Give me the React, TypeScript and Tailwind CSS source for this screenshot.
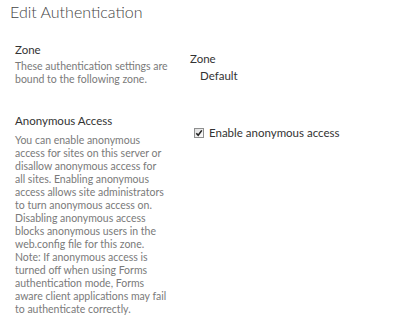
import React from "react";

const anonLines = [
  "You can enable anonymous",
  "access for sites on this server or",
  "disallow anonymous access for",
  "all sites. Enabling anonymous",
  "access allows site administrators",
  "to turn anonymous access on.",
  "Disabling anonymous access",
  "blocks anonymous users in the",
  "web.config file for this zone.",
  "Note: If anonymous access is",
  "turned off when using Forms",
  "authentication mode, Forms",
  "aware client applications may fail",
  "to authenticate correctly.",
];

export default function App() {
  return (
    <div className="w-[413px] h-[330px] bg-white overflow-hidden text-[#444]" style={{ fontFamily: 'Lato, "Open Sans", sans-serif' }}>
      <div className="pl-[10px] pt-[1px] text-[16px] font-light leading-[22px] text-[#444]">Edit Authentication</div>
      <div className="flex pl-[15px] pt-[19px]">
        <div className="w-[175px]">
          <div className="text-[11.5px] leading-[15px] text-[#333]">Zone</div>
          <div className="mt-[3px] text-[10.5px] leading-[13px] text-[#7a7a7a]">
            <div>These authentication settings are</div>
            <div>bound to the following zone.</div>
          </div>
        </div>
        <div className="pt-[9px]">
          <div className="text-[11.5px] leading-[15px] text-[#333]">Zone</div>
          <div className="pl-[10px] mt-[2px] text-[11.5px] leading-[15px] text-[#333]">Default</div>
        </div>
      </div>
      <div className="flex pl-[15px] pt-[27px]">
        <div className="w-[179px]">
          <div className="text-[11.5px] leading-[15px] text-[#333]">Anonymous Access</div>
          <div className="mt-[6px] text-[10.5px] leading-[13px] text-[#7a7a7a]">
            {anonLines.map((l) => (
              <div key={l} className="whitespace-nowrap">{l}</div>
            ))}
          </div>
        </div>
        <div className="pt-[12px] flex items-center gap-[5px] h-fit">
          <svg width="10" height="10" viewBox="0 0 10 10" className="shrink-0">
            <defs>
              <linearGradient id="cbg" x1="0" y1="0" x2="1" y2="1">
                <stop offset="0" stopColor="#dcdcdc" />
                <stop offset="1" stopColor="#ffffff" />
              </linearGradient>
            </defs>
            <rect x="0.5" y="0.5" width="9" height="9" fill="url(#cbg)" stroke="#8e8f8f" />
            <path d="M2.3 5.2 L4.2 7.3 L7.8 2.4" fill="none" stroke="#222" strokeWidth="1.6" />
          </svg>
          <span className="text-[11.5px] leading-[15px] text-[#333]">Enable anonymous access</span>
        </div>
      </div>
    </div>
  );
}
